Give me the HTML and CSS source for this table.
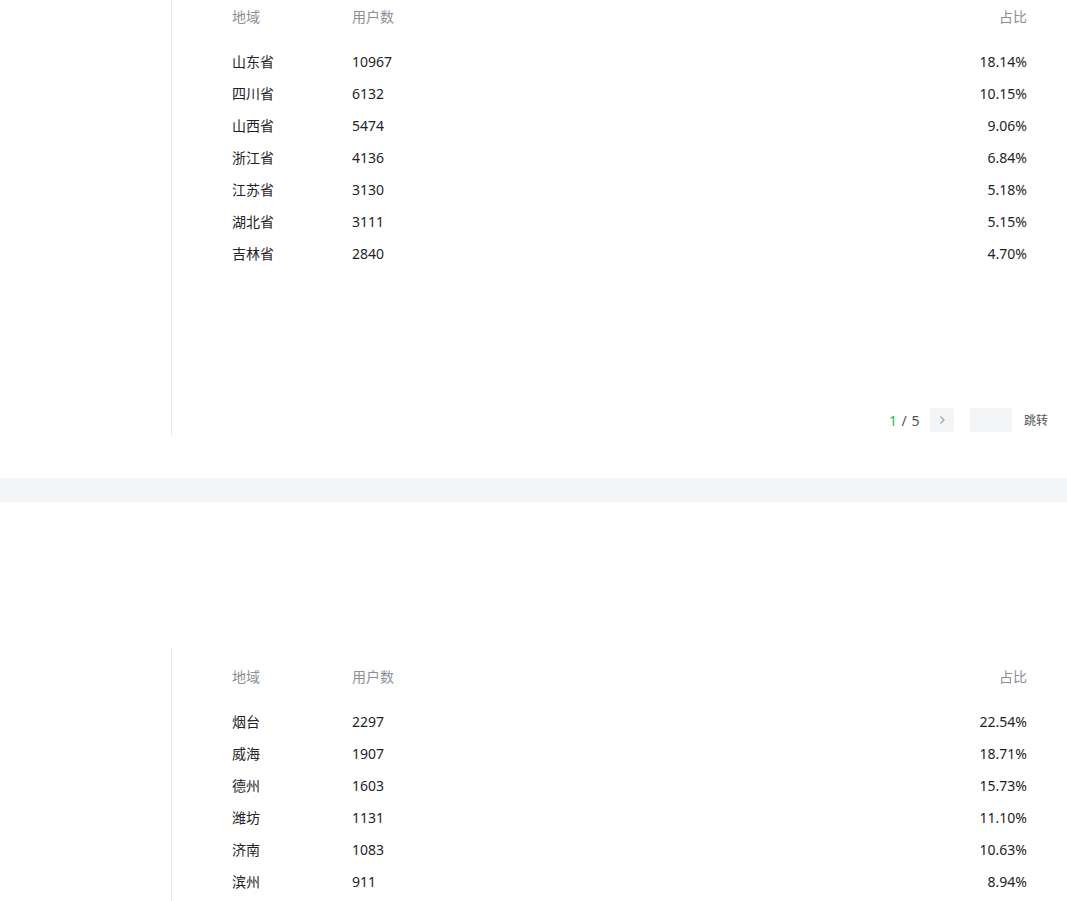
FILE: index.html
```html
<!DOCTYPE html>
<html lang="zh-CN">
<head>
<meta charset="utf-8">
<link rel="stylesheet" href="styles.css">
</head>
<body>
<section class="card card-top">
  <div class="side"></div>
  <div class="main">
    <div class="table">
      <div class="row head"><span class="c1">地域</span><span class="c2">用户数</span><span class="c3">占比</span></div>
      <div class="rows">
        <div class="row"><span class="c1">山东省</span><span class="c2">10967</span><span class="c3">18.14%</span></div>
        <div class="row"><span class="c1">四川省</span><span class="c2">6132</span><span class="c3">10.15%</span></div>
        <div class="row"><span class="c1">山西省</span><span class="c2">5474</span><span class="c3">9.06%</span></div>
        <div class="row"><span class="c1">浙江省</span><span class="c2">4136</span><span class="c3">6.84%</span></div>
        <div class="row"><span class="c1">江苏省</span><span class="c2">3130</span><span class="c3">5.18%</span></div>
        <div class="row"><span class="c1">湖北省</span><span class="c2">3111</span><span class="c3">5.15%</span></div>
        <div class="row"><span class="c1">吉林省</span><span class="c2">2840</span><span class="c3">4.70%</span></div>
      </div>
    </div>
    <div class="pager">
      <span class="pages"><span class="cur">1</span> / 5</span>
      <button class="next" type="button">
        <svg width="8" height="10" viewBox="0 0 8 10"><path d="M2.5 1.5 L6 5 L2.5 8.5" fill="none" stroke="#999ea8" stroke-width="1.2"/></svg>
      </button>
      <span class="jump-input"></span>
      <span class="jump">跳转</span>
    </div>
  </div>
</section>
<div class="band"></div>
<div class="spacer"></div>
<section class="card card-bottom">
  <div class="side"></div>
  <div class="main">
    <div class="table">
      <div class="row head"><span class="c1">地域</span><span class="c2">用户数</span><span class="c3">占比</span></div>
      <div class="rows">
        <div class="row"><span class="c1">烟台</span><span class="c2">2297</span><span class="c3">22.54%</span></div>
        <div class="row"><span class="c1">威海</span><span class="c2">1907</span><span class="c3">18.71%</span></div>
        <div class="row"><span class="c1">德州</span><span class="c2">1603</span><span class="c3">15.73%</span></div>
        <div class="row"><span class="c1">潍坊</span><span class="c2">1131</span><span class="c3">11.10%</span></div>
        <div class="row"><span class="c1">济南</span><span class="c2">1083</span><span class="c3">10.63%</span></div>
        <div class="row"><span class="c1">滨州</span><span class="c2">911</span><span class="c3">8.94%</span></div>
      </div>
    </div>
  </div>
</section>
</body>
</html>
```
FILE: styles.css
```css
html, body {
  margin: 0;
  padding: 0;
  background: #fff;
}
body {
  font-family: "Noto Sans", "Noto Sans CJK SC", sans-serif;
  font-size: 14px;
  color: #1f2329;
  overflow: hidden;
  height: 901px;
}
.card {
  display: flex;
}
.side {
  width: 171px;
  flex: none;
  border-right: 1px solid #e6e7ea;
}
.main {
  flex: 1;
  display: flex;
  flex-direction: column;
}
.card-top .main {
  height: 437px;
}
.table {
  padding: 1px 40px 0 60px;
}
.card-bottom .table {
  padding-top: 13px;
  padding-bottom: 40px;
}
.row {
  display: flex;
  height: 32px;
  align-items: center;
  line-height: 20px;
}
.head {
  color: #8a8f99;
  margin-bottom: 13px;
}
.c1 { width: 120px; flex: none; }
.c2 { flex: 1; }
.c3 { text-align: right; }
.pager {
  margin-top: auto;
  margin-bottom: 5px;
  display: flex;
  align-items: center;
  justify-content: flex-end;
  padding-right: 19px;
  height: 24px;
}
.pages {
  color: #4e5359;
  margin-right: 10px;
  letter-spacing: 0.5px;
}
.cur {
  color: #1fb85b;
}
.next {
  width: 24px;
  height: 24px;
  border: none;
  border-radius: 2px;
  background: #f4f5f7;
  padding: 0;
  display: flex;
  align-items: center;
  justify-content: center;
  margin-right: 16px;
}
.jump-input {
  width: 42px;
  height: 24px;
  border-radius: 2px;
  background: #f4f5f7;
  margin-right: 12px;
}
.jump {
  font-size: 12px;
  color: #4e5359;
}
.band {
  margin-top: 41px;
  height: 24px;
  background: #f4f5f7;
}
.spacer {
  height: 146px;
}
```
